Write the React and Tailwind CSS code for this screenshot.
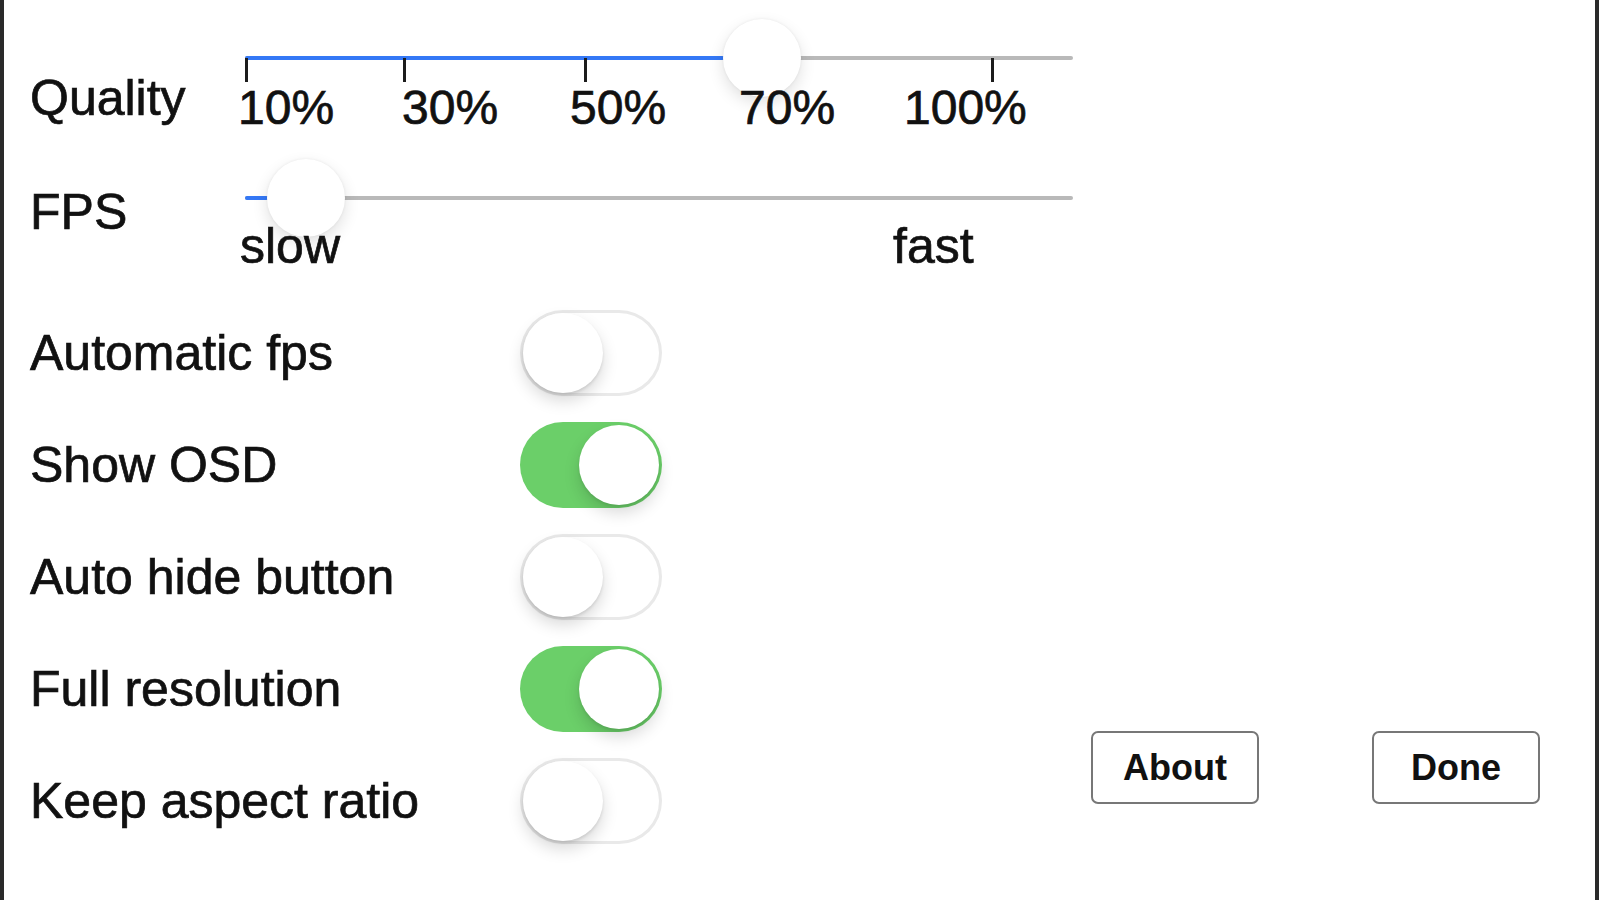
import React from "react";

// slider geometry, px from the left end of the track
const QUALITY = {
  thumb: 479,
  ticks: [0, 158, 339, 520, 746],
  size: "text-[48px]",
  labels: [
    { text: "10%", left: -7 },
    { text: "30%", left: 157 },
    { text: "50%", left: 325 },
    { text: "70%", left: 494 },
    { text: "100%", left: 659 },
  ],
};

const FPS = {
  thumb: 23,
  ticks: [],
  size: "text-[50px]",
  labels: [
    { text: "slow", left: -5 },
    { text: "fast", left: 648 },
  ],
};

const SWITCHES = [
  { label: "Automatic fps", on: false },
  { label: "Show OSD", on: true },
  { label: "Auto hide button", on: false },
  { label: "Full resolution", on: true },
  { label: "Keep aspect ratio", on: false },
];

function Slider({ thumb, ticks, labels, labelTop, size }) {
  return (
    <div className="relative w-[828px] h-full">
      <div className="absolute left-0 right-0 top-[56px] h-[4px] rounded-full bg-[#b9b9b9]" />
      <div
        className="absolute left-0 top-[56px] h-[4px] rounded-full bg-[#3478f6]"
        style={{ width: thumb }}
      />
      {ticks.map((x) => (
        <div
          key={x}
          className="absolute top-[58px] h-[24px] w-[3px] bg-[#1c1c1c]"
          style={{ left: x }}
        />
      ))}
      <div
        className="absolute top-[19px] size-[78px] rounded-full bg-white shadow-[0_6px_16px_rgba(0,0,0,0.12),0_0_3px_rgba(0,0,0,0.07)]"
        style={{ left: thumb - 1 }}
      />
      {labels.map((l) => (
        <span
          key={l.text}
          className={`absolute ${size} leading-none`}
          style={{ left: l.left, top: labelTop }}
        >
          {l.text}
        </span>
      ))}
    </div>
  );
}

function Toggle({ on }) {
  return (
    <div
      className={
        on
          ? "relative w-[142px] h-[86px] rounded-full bg-[#6bcf69]"
          : "relative w-[142px] h-[86px] rounded-full bg-white shadow-[inset_0_0_0_3px_#e9e9e9]"
      }
    >
      <div
        className={
          on
            ? "absolute top-[3px] right-[3px] size-[80px] rounded-full bg-white shadow-[0_8px_16px_rgba(0,0,0,0.15),0_2px_3px_rgba(0,0,0,0.08)]"
            : "absolute top-[3px] left-[3px] size-[80px] rounded-full bg-white shadow-[0_8px_16px_rgba(0,0,0,0.15),0_2px_3px_rgba(0,0,0,0.1)]"
        }
      />
    </div>
  );
}

export default function App() {
  return (
    <div className="h-[900px] w-full flex bg-white border-x-4 border-[#2a2a2a] font-['Liberation_Sans',Arial,sans-serif] text-[#111] [-webkit-text-stroke:0.7px_#111] overflow-hidden">
      {/* settings column */}
      <div className="w-[1087px] shrink-0 flex flex-col pl-[26px]">
        <div className="h-[140px] flex">
          <div className="w-[215px] pt-[73px] text-[50px] leading-none">Quality</div>
          <Slider {...QUALITY} labelTop={84} />
        </div>
        <div className="h-[157px] flex">
          <div className="w-[215px] pt-[47px] text-[50px] leading-none">FPS</div>
          <Slider {...FPS} labelTop={81} />
        </div>
        {SWITCHES.map((s) => (
          <div key={s.label} className="h-[112px] flex items-center">
            <div className="w-[490px] text-[50px] leading-none">{s.label}</div>
            <Toggle on={s.on} />
          </div>
        ))}
      </div>

      {/* buttons */}
      <div className="flex-1 flex items-end justify-between pb-[96px] pr-[55px]">
        <button className="w-[168px] h-[73px] rounded-[7px] border-2 border-[#777] bg-white text-[36px] font-bold text-[#111] [-webkit-text-stroke:0px]">
          About
        </button>
        <button className="w-[168px] h-[73px] rounded-[7px] border-2 border-[#777] bg-white text-[36px] font-bold text-[#111] [-webkit-text-stroke:0px]">
          Done
        </button>
      </div>
    </div>
  );
}
